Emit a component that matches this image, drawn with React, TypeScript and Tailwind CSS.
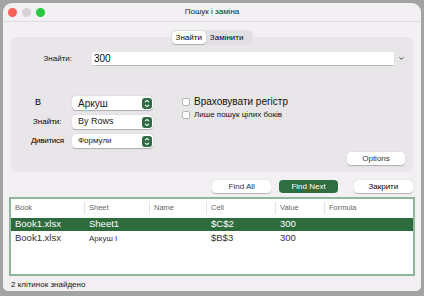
import { ChevronDown } from 'lucide-react';

const font = { fontFamily: '"Liberation Sans", Arial, sans-serif' };

function Stepper() {
  return (
    <span className="w-[10px] h-[11px] rounded-[3px] bg-[#2f6b45] flex flex-col items-center justify-center">
      <svg width="6" height="9" viewBox="0 0 6 9" fill="none" stroke="white" strokeWidth="1.1">
        <path d="M1 3.2 L3 1.4 L5 3.2" />
        <path d="M1 5.8 L3 7.6 L5 5.8" />
      </svg>
    </span>
  );
}

function Select({ label, size }: { label: string; size: string }) {
  return (
    <div className="w-[81px] h-[14px] bg-white rounded-[4px] shadow-[0_0.5px_1px_rgba(0,0,0,0.25)] flex items-center pl-[6px] pr-[1px]">
      <span className={`flex-1 text-[#1a1a1a] ${size}`}>{label}</span>
      <Stepper />
    </div>
  );
}

function Check({ label, size }: { label: string; size: string }) {
  return (
    <div className="flex items-center gap-[4px] h-[13px]">
      <span className="w-[8px] h-[8px] rounded-[2px] bg-white border border-[#b9b6b9]" />
      <span className={`text-[#111] ${size}`}>{label}</span>
    </div>
  );
}

const cols = [
  { name: 'Book', w: 'w-[74px]' },
  { name: 'Sheet', w: 'w-[65px]' },
  { name: 'Name', w: 'w-[57px]' },
  { name: 'Cell', w: 'w-[69px]' },
  { name: 'Value', w: 'w-[49px]' },
  { name: 'Formula', w: 'flex-1' },
];

const rows = [
  { cells: ['Book1.xlsx', 'Sheet1', '', '$C$2', '300', ''], selected: true },
  { cells: ['Book1.xlsx', 'Аркуш І', '', '$B$3', '300', ''], selected: false },
];

export default function App() {
  return (
    <div style={font} className="w-[424px] h-[296px] bg-[#a3a3a3] pt-[3px] pl-[3px] pr-[3px] pb-[5px]">
      <div className="h-full bg-[#f3f0f3] rounded-t-[9px] rounded-b-[5px] flex flex-col">
        {/* Title bar */}
        <div className="h-[20px] flex items-center px-[5px] border-b border-[#dedbde]">
          <div className="flex gap-[5px] w-[40px]">
            <span className="w-[9px] h-[9px] rounded-full bg-[#fe5f57]" />
            <span className="w-[9px] h-[9px] rounded-full bg-[#d6d3d6]" />
            <span className="w-[9px] h-[9px] rounded-full bg-[#2ac840]" />
          </div>
          <div className="flex-1 text-center text-[8px] text-[#1d1d1d]">Пошук і заміна</div>
          <div className="w-[40px]" />
        </div>

        <div className="px-[8px] flex flex-col">
          {/* Tabs */}
          <div className="flex justify-center mt-[8px] -mb-[8px] relative z-10">
            <div className="h-[15px] flex items-center bg-[#e3e0e3] rounded-[5px] p-[1px]">
              <span className="h-[13px] px-[4px] bg-white rounded-[4px] shadow-[0_0.5px_1px_rgba(0,0,0,0.25)] text-[8px] text-black flex items-center">Знайти</span>
              <span className="h-[13px] px-[4px] text-[8px] text-black flex items-center pr-[9px]">Замінити</span>
            </div>
          </div>

          {/* Panel */}
          <div className="h-[135px] bg-[#e9e6e9] rounded-[6px] flex flex-col pt-[15px] px-[8px] pb-[7px]">
            <div className="flex items-center h-[13px]">
              <span className="w-[53px] text-right text-[8px] text-[#111]">Знайти:</span>
              <div className="ml-[20px] w-[302px] h-[13px] bg-white shadow-[0_0.5px_1px_rgba(0,0,0,0.2)] flex items-center px-[2px] text-[10px] text-[#111]">300</div>
              <ChevronDown className="ml-[4px] w-[7px] h-[7px] text-[#333]" strokeWidth={3} />
            </div>

            <div className="flex mt-[31px]">
              <div className="flex flex-col gap-[5px]">
                <div className="flex items-center">
                  <span className="w-[53px] pl-[16px] text-[9px] text-black">В</span>
                  <Select label="Аркуш" size="text-[10px]" />
                </div>
                <div className="flex items-center">
                  <span className="w-[53px] pl-[14px] text-[8px] text-black">Знайти:</span>
                  <Select label="By Rows" size="text-[9px]" />
                </div>
                <div className="flex items-center">
                  <span className="w-[53px] pl-[12px] text-[8px] text-black tracking-[-0.3px]">Дивитися</span>
                  <Select label="Формули" size="text-[8px]" />
                </div>
              </div>
              <div className="ml-[29px] -mt-[1px] flex flex-col">
                <Check label="Враховувати регістр" size="text-[10px]" />
                <Check label="Лише пошук цілих боків" size="text-[8px]" />
              </div>
            </div>

            <div className="mt-auto flex justify-end">
              <button className="w-[58px] h-[13px] bg-white rounded-[4px] shadow-[0_0.5px_1px_rgba(0,0,0,0.25)] text-[8px] text-[#333] flex items-center justify-center">Options</button>
            </div>
          </div>

          {/* Buttons */}
          <div className="flex mt-[8px] h-[13px] pl-[201px] gap-[8px]">
            <button className="w-[60px] h-[13px] bg-white rounded-[4px] shadow-[0_0.5px_1px_rgba(0,0,0,0.25)] text-[8px] text-[#333] flex items-center justify-center">Find All</button>
            <button className="w-[59px] h-[13px] bg-[#2f6e43] rounded-[4px] text-[8px] text-white flex items-center justify-center">Find Next</button>
            <button className="ml-[8px] w-[60px] h-[13px] bg-white rounded-[4px] shadow-[0_0.5px_1px_rgba(0,0,0,0.25)] text-[8px] text-black flex items-center justify-center">Закрити</button>
          </div>

          {/* Results table */}
          <div className="mt-[4px] -mx-[2px] h-[79px] border-[2px] border-[#8fb89a] bg-white flex flex-col">
            <div className="h-[18px] flex items-center">
              {cols.map((c, i) => (
                <div key={c.name} className={`${c.w} h-[12px] flex items-center pl-[4px] text-[7.5px] text-[#666] ${i < cols.length - 1 ? 'border-r border-[#e4e4e4]' : ''}`}>
                  {c.name}
                </div>
              ))}
            </div>
            {rows.map((r, ri) => (
              <div key={ri} className={`h-[13px] mt-[1px] flex items-center ${r.selected ? 'bg-[#2e6b3d] text-white' : 'text-[#333]'}`}>
                {cols.map((c, i) => (
                  <div key={c.name} className={`${c.w} pl-[4px] ${i === 1 && !r.selected ? 'text-[8px]' : 'text-[9.5px]'}`}>
                    {r.cells[i]}
                  </div>
                ))}
              </div>
            ))}
          </div>

          {/* Status */}
          <div className="mt-[3px] text-[8px] text-[#111]">2 клітинок знайдено</div>
        </div>
      </div>
    </div>
  );
}
